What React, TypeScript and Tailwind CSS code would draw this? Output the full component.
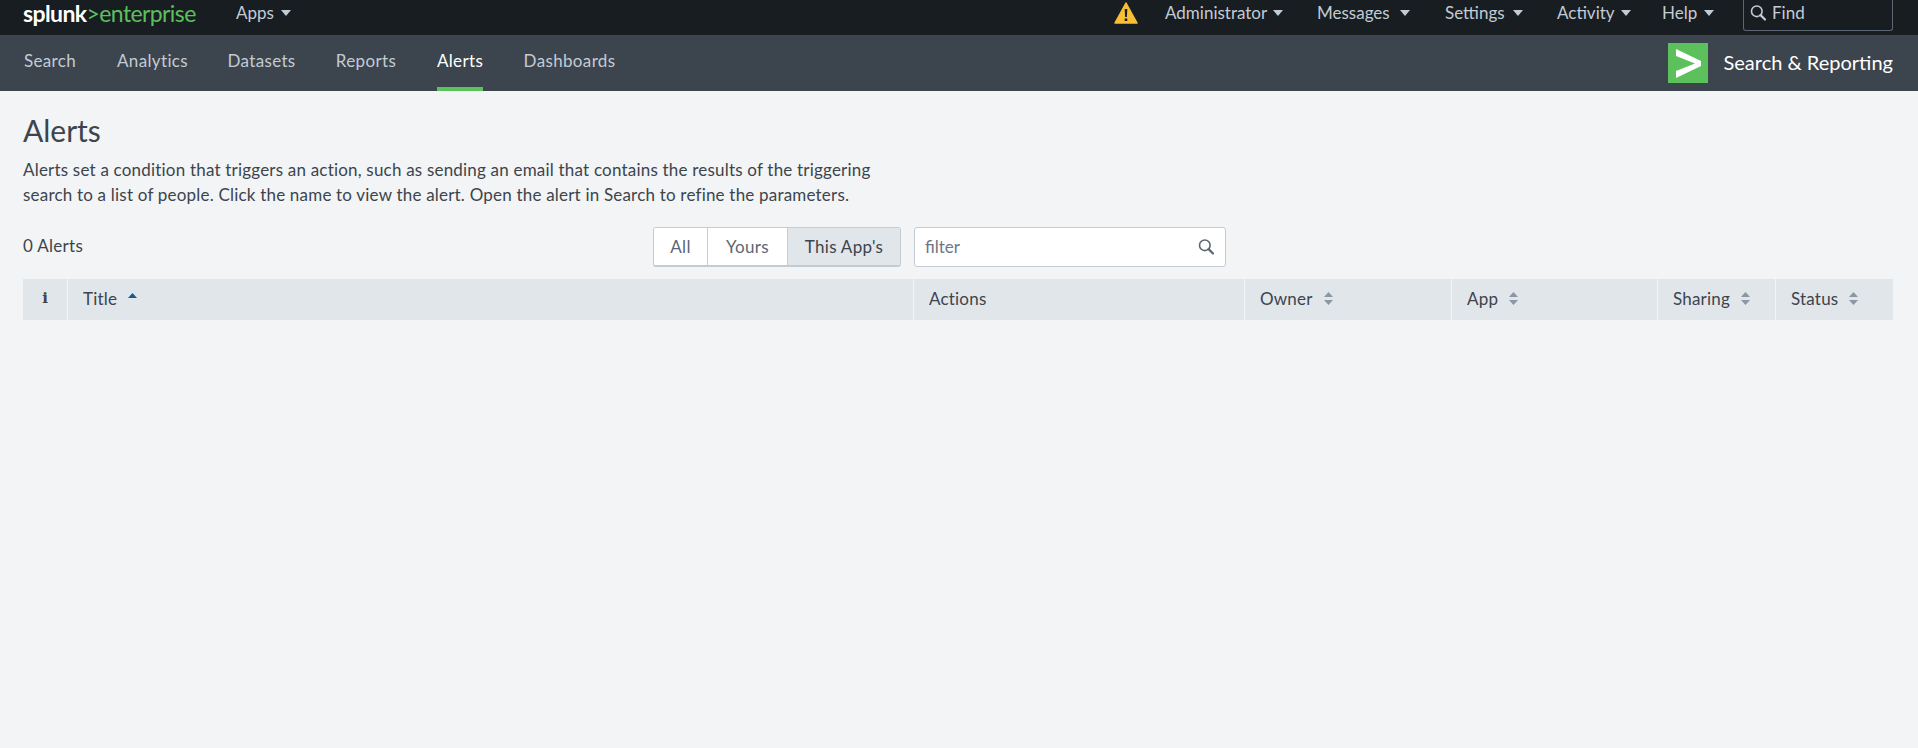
import React from 'react';

const font = { fontFamily: 'Lato, sans-serif' };

function Caret() {
  return (
    <svg className="w-[10px] h-[6px] shrink-0" viewBox="0 0 10 6">
      <path d="M0 0h10L5 6z" fill="#c3cbd4" />
    </svg>
  );
}

function SortIcon() {
  return (
    <svg className="ml-[11px] w-[9px] h-[13px] shrink-0" viewBox="0 0 9 13">
      <path d="M4.5 0L9 5H0zM0 8h9l-4.5 5z" fill="#8b97a3" />
    </svg>
  );
}

function SearchIcon({ color, size }: { color: string; size: string }) {
  return (
    <svg className={size} viewBox="0 0 16 16" fill="none" stroke={color}>
      <circle cx="6.8" cy="6.8" r="5.3" strokeWidth="1.6" />
      <path d="M10.6 10.6L15 15" strokeWidth="2.2" strokeLinecap="round" />
    </svg>
  );
}

function TopMenu({ label, className }: { label: string; className: string }) {
  return (
    <div className={`flex items-center justify-between text-[#c3cbd4] text-[17px] whitespace-nowrap ${className}`}>
      {label}
      <Caret />
    </div>
  );
}

const navItems = [
  { label: 'Search', w: 'w-[54px]', active: false },
  { label: 'Analytics', w: 'w-[69px]', active: false },
  { label: 'Datasets', w: 'w-[67px]', active: false },
  { label: 'Reports', w: 'w-[60px]', active: false },
  { label: 'Alerts', w: 'w-[46px]', active: true },
  { label: 'Dashboards', w: 'w-[91px]', active: false },
];

function HeaderCell({ label, className }: { label: string; className: string }) {
  return (
    <div className={`flex items-center h-full border-l border-[#f2f4f5] pl-[15px] pb-[2px] text-[#3c444d] text-[17px] tracking-[0.2px] ${className}`}>
      {label}
      {label !== 'Actions' && <SortIcon />}
    </div>
  );
}

export default function App() {
  return (
    <div className="min-h-[748px] bg-[#f2f4f5]" style={font}>
      {/* Top bar */}
      <div className="h-[35px] bg-[#171d21] flex items-start pl-[23px] pr-[25px]">
        <div className="h-[27px] w-[213px] flex items-center text-[23px] leading-none tracking-[-0.6px]">
          <span className="text-white font-bold">splunk</span>
          <span className="text-[#5cc05c]">&gt;enterprise</span>
        </div>
        <TopMenu label="Apps" className="h-[25px] w-[55px]" />
        <div className="flex-1" />
        <svg className="w-[24px] h-[22px] mt-[2px] mr-[27px]" viewBox="0 0 24 22">
          <path d="M12 1L23 21H1z" fill="#f8be34" stroke="#f8be34" strokeWidth="1.5" strokeLinejoin="round" />
          <path d="M10.700 7h2.600l-.4 8h-1.800zM10.700 16.500h2.600v2.600h-2.600z" fill="#171d21" />
        </svg>
        <TopMenu label="Administrator" className="h-[25px] w-[118px] mr-[34px]" />
        <TopMenu label="Messages" className="h-[25px] w-[93px] mr-[35px]" />
        <TopMenu label="Settings" className="h-[25px] w-[78px] mr-[34px]" />
        <TopMenu label="Activity" className="h-[25px] w-[74px] mr-[31px]" />
        <TopMenu label="Help" className="h-[25px] w-[52px] mr-[29px]" />
        <div className="w-[150px] h-[31px] border border-t-0 border-[#5c6773] rounded-b-[3px] flex items-start pt-[4px] pl-[6px] gap-[6px] text-[#c3cbd4] text-[17px] leading-[17px]">
          <SearchIcon color="#c3cbd4" size="w-[16px] h-[17px]" />
          Find
        </div>
      </div>

      {/* App bar */}
      <div className="h-[56px] bg-[#3c444d] flex items-stretch pl-[23px] pr-[25px]">
        <div className="flex gap-[41px]">
          {navItems.map((item) => (
            <div
              key={item.label}
              className={`${item.w} h-full flex justify-center items-center whitespace-nowrap text-[17px] tracking-[0.35px] border-b-[4px] pb-[1px] ${
                item.active ? 'text-white border-[#5cc05c]' : 'text-[#c3cbd4] border-transparent'
              }`}
            >
              {item.label}
            </div>
          ))}
        </div>
        <div className="flex-1" />
        <div className="flex items-center gap-[16px]">
          <svg className="w-[40px] h-[40px]" viewBox="0 0 40 40">
            <rect width="40" height="40" fill="#5cc05c" />
            <path d="M8 6l25 12v5L8 35v-7l19-7.500L8 13z" fill="#fff" />
          </svg>
          <span className="text-white text-[20px] pb-[2px]">Search &amp; Reporting</span>
        </div>
      </div>

      {/* Page */}
      <div className="pl-[23px] pr-[25px]">
        <h1 className="pt-[21px] text-[30px] leading-[36px] font-normal text-[#3c444d]">Alerts</h1>
        <p className="mt-[9px] text-[17px] tracking-[0.2px] leading-[25px] text-[#3c444d] w-[880px]">
          Alerts set a condition that triggers an action, such as sending an email that contains the results of the triggering search to a list of people. Click the name to view the alert. Open the alert in Search to refine the parameters.
        </p>

        <div className="mt-[20px] h-[40px] flex items-center text-[#3c444d] text-[17px] tracking-[0.3px]">
          <div className="w-[630px] pb-[2px]">0 Alerts</div>
          <div className="flex h-[40px] border border-[#c3cbd4] border-b-2 rounded-[3px] text-[17px] text-[#5c6773] overflow-hidden">
            <div className="w-[54px] bg-white flex items-center justify-center border-r border-[#c3cbd4]">All</div>
            <div className="w-[79px] bg-white flex items-center justify-center">Yours</div>
            <div className="w-[113px] bg-[#e1e6eb] border-l border-[#c3cbd4] text-[#3c444d] flex items-center justify-center whitespace-nowrap">This App's</div>
          </div>
          <div className="ml-[13px] w-[312px] h-[40px] bg-white border border-[#c3cbd4] rounded-[3px] flex items-center justify-between pl-[10px] pr-[11px] pb-[1px] text-[17px] tracking-normal text-[#6b7785]">
            filter
            <SearchIcon color="#5c6773" size="w-[16px] h-[17px]" />
          </div>
        </div>

        {/* Table header */}
        <div className="mt-[12px] h-[41px] bg-[#e1e6eb] flex items-center">
          <div className="w-[44px] h-full flex items-center justify-center pb-[2px] text-[#3c444d] text-[15px] font-bold" style={{ fontFamily: '"DejaVu Serif", serif' }}>
            i
          </div>
          <div className="w-[846px] h-full flex items-center border-l border-[#f2f4f5] pl-[15px] pb-[2px] text-[#3c444d] text-[17px] tracking-[0.2px]">
            Title
            <svg className="ml-[11px] -mt-[6px] w-[9px] h-[5px]" viewBox="0 0 9 5">
              <path d="M4.500 0L9 5H0z" fill="#1a5a8a" />
            </svg>
          </div>
          <HeaderCell label="Actions" className="w-[331px]" />
          <HeaderCell label="Owner" className="w-[207px]" />
          <HeaderCell label="App" className="w-[206px]" />
          <HeaderCell label="Sharing" className="w-[118px]" />
          <HeaderCell label="Status" className="flex-1" />
        </div>
      </div>
    </div>
  );
}
